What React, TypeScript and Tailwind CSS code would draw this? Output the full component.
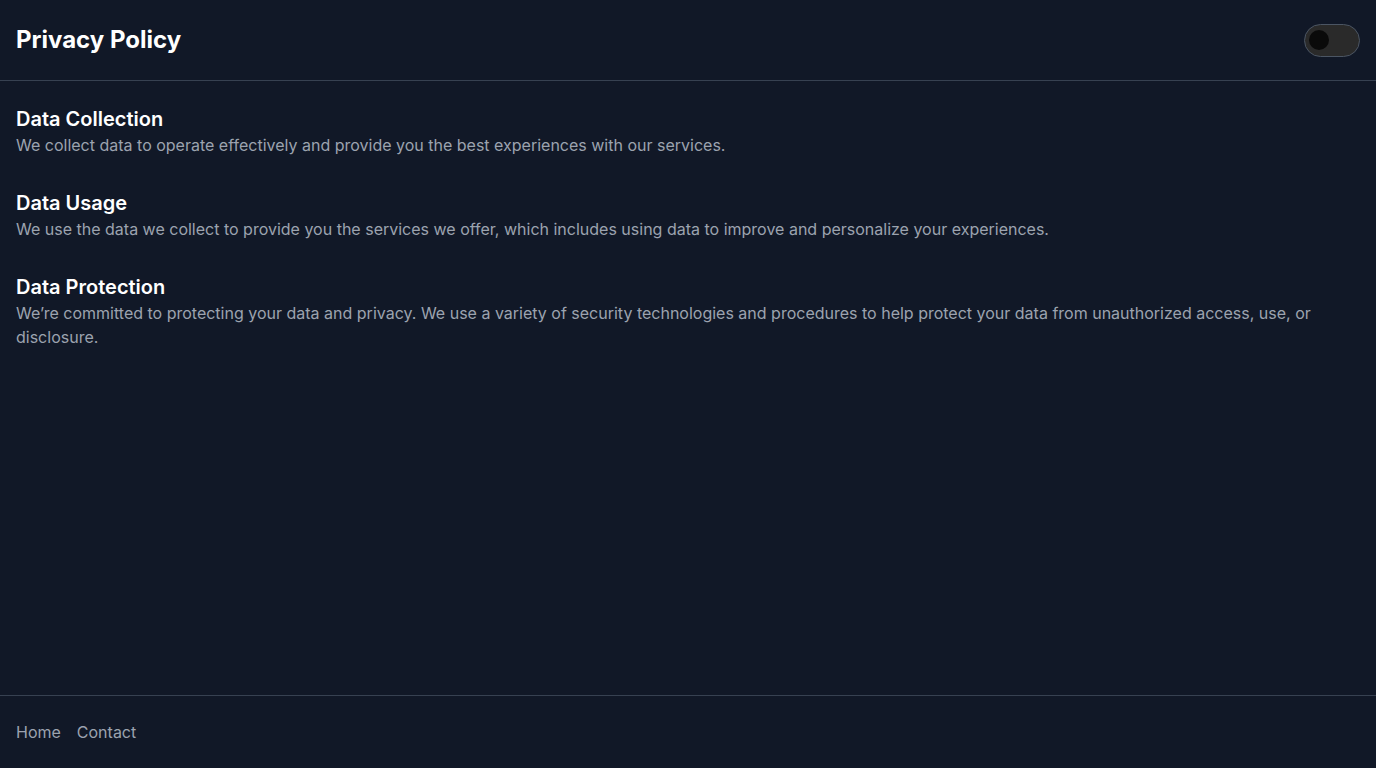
import { useState } from "react";

const sections = [
  {
    title: "Data Collection",
    body: "We collect data to operate effectively and provide you the best experiences with our services.",
  },
  {
    title: "Data Usage",
    body: "We use the data we collect to provide you the services we offer, which includes using data to improve and personalize your experiences.",
  },
  {
    title: "Data Protection",
    body: "We\u2019re committed to protecting your data and privacy. We use a variety of security technologies and procedures to help protect your data from unauthorized access, use, or disclosure.",
  },
];

const App = () => {
  const [dark, setDark] = useState(false);

  return (
    <div className="flex min-h-screen flex-col bg-[#111827] font-['Inter',sans-serif]">
      <header className="flex h-[81px] items-center justify-between border-b border-[#374151] px-4">
        <h1 className="text-2xl font-bold text-white">Privacy Policy</h1>
        <button
          onClick={() => setDark(!dark)}
          className="flex h-[33px] w-14 items-center rounded-full border border-[#4b5563] bg-[#2a2a2a] px-[4px]"
        >
          <span
            className={
              dark
                ? "h-5 w-5 translate-x-6 rounded-full bg-[#0a0a0a]"
                : "h-5 w-5 rounded-full bg-[#0a0a0a]"
            }
          />
        </button>
      </header>
      <main className="flex flex-1 flex-col gap-8 px-4 py-6">
        {sections.map((s) => (
          <section key={s.title}>
            <h2 className="text-xl leading-7 font-semibold text-white">{s.title}</h2>
            <p className="text-base text-[#9ca3af]">{s.body}</p>
          </section>
        ))}
      </main>
      <footer className="flex gap-4 border-t border-[#374151] px-4 py-6 text-base text-[#9ca3af]">
        <a href="#">Home</a>
        <a href="#">Contact</a>
      </footer>
    </div>
  );
};

export default App;
